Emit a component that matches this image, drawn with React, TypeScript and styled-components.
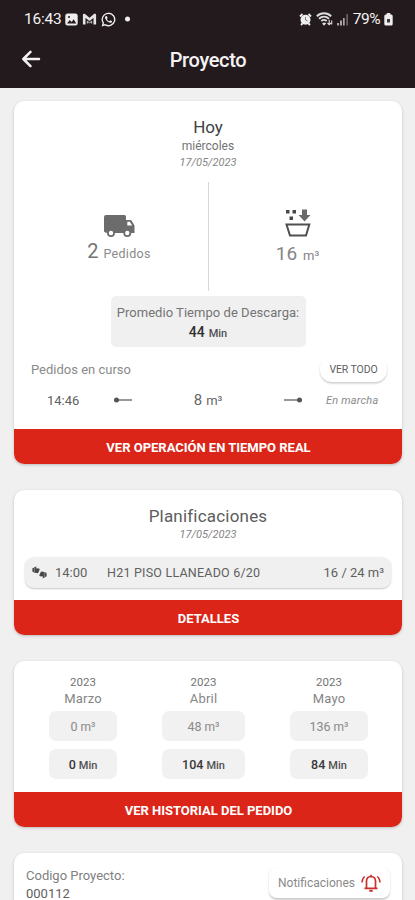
import React from 'react';
import styled, { createGlobalStyle } from 'styled-components';

const GlobalStyle = createGlobalStyle`
  * { box-sizing: border-box; }
  html, body { margin: 0; height: 900px; overflow: hidden; background: #f0f0f0; }
  body { font-family: Roboto, "Liberation Sans", sans-serif; color: #747474; }
  svg { display: block; flex: none; }
`;

const Screen = styled.div`
  width: 415px;
  height: 900px;
  overflow: hidden;
  background: #f0f0f0;
`;

const Header = styled.header`
  height: 88px;
  background: #231a1d;
  color: #f4f2f2;
`;

const StatusBar = styled.div`
  display: flex;
  align-items: center;
  justify-content: space-between;
  height: 38px;
  padding: 0 22px 0 24px;
`;

const StatusGroup = styled.div<{ $gap: number }>`
  display: flex;
  align-items: center;
  gap: ${(p) => p.$gap}px;
`;

const TitleBar = styled.div`
  display: grid;
  grid-template-columns: 40px 1fr 40px;
  align-items: center;
  height: 43px;
  padding: 0 19px 0 20px;
`;

const Title = styled.h1`
  margin: 0;
  font-size: 20px;
  font-weight: 500;
  line-height: 44px;
  text-align: center;
  letter-spacing: -0.35px;
`;

const BackButton = styled.button`
  display: flex;
  padding: 0 0 3px;
  border: 0;
  background: none;
  color: inherit;
`;

const Cards = styled.main`
  display: flex;
  flex-direction: column;
  gap: 26px;
  padding: 13px 13px 0 14px;
`;

const Card = styled.section<{ $height: number }>`
  display: flex;
  flex-direction: column;
  flex: none;
  height: ${(p) => p.$height}px;
  border-radius: 10px;
  background: #fff;
  overflow: hidden;
  box-shadow: 0 1px 3px rgba(0, 0, 0, 0.22);
`;

const CardAction = styled.button`
  height: 35px;
  margin-top: auto;
  padding: 2px 0 0 1px;
  border: 0;
  background: #db2518;
  color: #fff;
  font: 700 13px/33px Roboto, sans-serif;
  letter-spacing: -0.01px;
`;

interface TextProps {
  $size: number;
  $line?: number;
  $color?: string;
  $weight?: number;
  $italic?: boolean;
  $spacing?: number;
}

const Text = styled.span<TextProps>`
  display: block;
  font-size: ${(p) => p.$size}px;
  line-height: ${(p) => (p.$line ? `${p.$line}px` : 'normal')};
  color: ${(p) => p.$color ?? 'inherit'};
  font-weight: ${(p) => p.$weight ?? 400};
  font-style: ${(p) => (p.$italic ? 'italic' : 'normal')};
  letter-spacing: ${(p) => p.$spacing ?? 0}px;
  white-space: pre;
`;

const CardHeading = styled.div`
  display: flex;
  flex-direction: column;
  align-items: center;
  padding-top: 16px;
`;

const Totals = styled.div`
  display: grid;
  grid-template-columns: 194px 1px 1fr;
  height: 109px;
  margin-top: 12px;
`;

const Divider = styled.div`
  background: #d6d6d6;
`;

const Total = styled.div<{ $top: number; $left?: number; $right?: number; $gap: number }>`
  display: flex;
  flex-direction: column;
  align-items: center;
  gap: ${(p) => p.$gap}px;
  padding: ${(p) => p.$top}px ${(p) => p.$right ?? 0}px 0 ${(p) => p.$left ?? 0}px;
`;

const Quantity = styled.div<{ $gap: number }>`
  display: flex;
  align-items: baseline;
  justify-content: center;
  gap: ${(p) => p.$gap}px;
`;

const Average = styled.div`
  display: flex;
  flex-direction: column;
  align-items: center;
  align-self: center;
  width: 195px;
  height: 51px;
  margin-top: 5px;
  padding: 7px 0 0;
  border-radius: 5px;
  background: #f0f0f0;
`;

const CurrentHeader = styled.div`
  display: flex;
  align-items: center;
  justify-content: space-between;
  height: 26px;
  margin-top: 9px;
  padding: 0 15px 0 17px;
`;

const PillButton = styled.button<{ $width: number; $height: number; $radius: number }>`
  display: flex;
  align-items: center;
  justify-content: center;
  gap: 6px;
  flex: none;
  width: ${(p) => p.$width}px;
  height: ${(p) => p.$height}px;
  padding: 0;
  border: 0;
  border-radius: ${(p) => p.$radius}px;
  background: #fff;
  color: inherit;
  font-family: inherit;
  box-shadow: 0 1.5px 2px rgba(0, 0, 0, 0.2);
`;

const OrderRow = styled.div`
  display: grid;
  grid-template-columns: 66px 20px 150px 43px 1fr;
  align-items: center;
  height: 20px;
  margin: 8px 0 0 33px;
`;

const PlanRow = styled.div`
  display: grid;
  grid-template-columns: 23px 52px 1fr auto;
  align-items: center;
  height: 31px;
  margin: 14px 11px 0 11px;
  padding: 0 7px 0 7px;
  border-radius: 9px;
  background: #f0f0f0;
  color: #606060;
  box-shadow: 0 1px 2px rgba(0, 0, 0, 0.22);
`;

const Months = styled.div`
  display: flex;
  justify-content: space-between;
  padding: 14px 34px 0 35px;
`;

const Month = styled.div<{ $width: number }>`
  display: flex;
  flex-direction: column;
  align-items: center;
  width: ${(p) => p.$width}px;
`;

const Chip = styled.div<{ $top: number }>`
  display: flex;
  align-items: baseline;
  justify-content: center;
  gap: 3px;
  align-self: stretch;
  height: 30px;
  margin-top: ${(p) => p.$top}px;
  border-radius: 7px;
  background: #f1f1f1;
`;

const ProjectRow = styled.div`
  display: flex;
  justify-content: space-between;
  padding: 14px 12px 0 12px;
`;

const MONTHS = [
  { name: 'Marzo', volume: '0', minutes: '0', width: 68 },
  { name: 'Abril', volume: '48', minutes: '104', width: 83 },
  { name: 'Mayo', volume: '136', minutes: '84', width: 78 },
];

const ImageIcon = () => (
  <svg width="13" height="13" viewBox="0 0 13 13">
    <rect x="0.3" y="0.5" width="12.4" height="12" rx="2.5" fill="#eee" />
    <path d="M2 10.5 4.7 7l2 2 2-2.8 2.6 4.3z" fill="#231a1d" />
    <circle cx="4" cy="4" r="1" fill="#231a1d" />
  </svg>
);

const MailIcon = () => (
  <svg width="15" height="12" viewBox="0 0 15 12" fill="none" stroke="#e6e3e3">
    <path d="M2.2 11.500V2l5.3 4.500L12.800 2v9.500" strokeWidth="2.600" strokeLinejoin="round" />
    <path d="M5.300 10.500V8.300l2.200 1.500 2.200-1.500v2.200" strokeWidth="0.900" />
  </svg>
);

const WhatsAppIcon = () => (
  <svg width="15" height="15" viewBox="0 0 24 24" fill="#eee">
    <path d="M12 1A11 11 0 0 0 2.6 17.7L1 23l5.5-1.5A11 11 0 1 0 12 1zm0 2.2a8.8 8.8 0 1 1-5.2 15.9l-2.7.8.8-2.6A8.8 8.8 0 0 1 12 3.200z" />
    <path d="M8 6.300c-1.700.9-2 2.800-.8 5 1.800 3.300 4.300 5.400 7.400 6 1.600.3 3-.8 3.200-2.500l-2.900-1.500-1.400 1.600c-2-.8-3.200-2-4.100-3.800l1.200-1.400L9.200 6.500z" />
  </svg>
);

const AlarmIcon = () => (
  <svg width="13" height="13" viewBox="0 0 13 13">
    <path d="M1 3.500 3.500 1M12 3.500 9.500 1M2 12l2-2M11 12l-2-2" stroke="#eee" strokeWidth="1.800" />
    <circle cx="6.500" cy="6.800" r="5" fill="#eee" />
    <path d="M6.500 4v3l2 1" stroke="#827b7d" strokeWidth="1" fill="none" />
  </svg>
);

const WifiIcon = () => (
  <svg width="17" height="14" viewBox="0 0 17 14" fill="none" stroke="#ddd" strokeWidth="1.900">
    <path d="M.8 4.200C5 .2 11 .2 15.200 4.200M3 6.700c3-2.700 7-2.700 10 0M5.300 9c1.800-1.500 3.600-1.500 5.400 0" />
    <path d="M6.800 11 8 12.400l1.500-1.600" />
    <path d="M13.200 7.800v4.600M11.500 11l1.700 1.700 1.700-1.700M15.700 12.500V8.500" strokeWidth="1.100" />
  </svg>
);

const SignalIcon = () => (
  <svg width="12" height="13" viewBox="0 0 12 13">
    <path d="M0 10h2v2.500H0zM3 7.500h2v5H3zM6 5h1.700v7.500H6z" fill="#aaa5a6" />
    <path d="M9.300 1H11v11.500H9.300z" fill="#686062" />
  </svg>
);

const BatteryIcon = () => (
  <svg width="9" height="13" viewBox="0 0 9 13">
    <rect x="2.500" y="0" width="4" height="3" rx="1" fill="#eee" />
    <rect x="0.300" y="1.500" width="8.400" height="11" rx="1.600" fill="#eee" />
    <path d="M3 6h3v3.500H3z" fill="#40383a" />
  </svg>
);

const BackIcon = () => (
  <svg width="21" height="20" viewBox="0 0 21 20" fill="none" stroke="#f4f2f2" strokeWidth="2.500" strokeLinecap="round" strokeLinejoin="round">
    <path d="M10.500 2.800 3.300 10l7.200 7.200M3.500 10H19" />
  </svg>
);

const TruckIcon = () => (
  <svg width="31" height="22" viewBox="0 0 31 22">
    <path d="M2 0h18.500q1.500 0 1.500 1.500V5h4.200q1 0 1.600.9l2.700 4.600V18h-25Q0 18 0 16V2Q0 0 2 0z" fill="#6c6c6c" />
    <path d="M23.300 6.800h2.500l2.400 3.800h-4.900z" fill="#fff" />
    <g fill="#fff" stroke="#6c6c6c" strokeWidth="1.800">
      <circle cx="7" cy="18" r="3.100" />
      <circle cx="23.300" cy="18" r="3.100" />
    </g>
  </svg>
);

const VolumeIcon = () => (
  <svg width="26" height="28" viewBox="0 0 26 28">
    <path d="M1 1h3.500v3.500H1zM7.500 1H11v3.500H7.500zM4.500 7.500H8V11H4.500z" fill="#484848" />
    <path d="M17 .5h5V6h3.500l-6 6.500-6-6.500H17z" fill="#6a6a6a" />
    <path d="M1.500 15.500h22.800L21 26.500H5z" fill="#fff" stroke="#505050" strokeWidth="2" />
  </svg>
);

const TripArrow = ({ start }: { start: boolean }) => (
  <svg width="20" height="6" viewBox="0 0 20 6">
    <path d="M1 3h18" stroke="#777" strokeWidth="1.500" />
    <circle cx={start ? 3.500 : 16.500} cy="3" r="2.500" fill="#555" />
  </svg>
);

const ThumbsIcon = () => (
  <svg width="15" height="13" viewBox="0 0 15 13" fill="#484848">
    <path d="M.3 2.500 4.500.2 4 2.300l3 .3q1 .3.500 1.400L6 7.200 2.600 6.800.5 5.700z" />
    <path d="M14.700 10.300l-4.200 2.300.5-2.100-3-.3q-1-.3-.500-1.400L9 5.600l3.400.4 2.100 1.100z" />
    <path d="M2.600 1.800v4.800M12.400 6.200V11" stroke="#aaa" strokeWidth=".6" />
  </svg>
);

const BellIcon = () => (
  <svg width="20" height="18" viewBox="0 0 20 18" fill="none" stroke="#c9322b" strokeWidth="1.700">
    <path d="M3.500 14.300h13M5.500 14V7.200q0-4.500 4.500-4.700 4.500.2 4.500 4.700V14M10 2.500V.8" />
    <path d="M8.300 16.700h3.400" strokeWidth="2" />
    <path d="M1 8.500Q1.100 4.500 3.700 2.500M19 8.500q-.1-4-2.700-6" strokeWidth="1.500" />
  </svg>
);

export default function App() {
  return (
    <Screen>
      <GlobalStyle />
      <Header>
        <StatusBar>
          <StatusGroup $gap={4}>
            <Text $size={15.5} $spacing={-0.25}>16:43</Text>
            <ImageIcon />
            <MailIcon />
            <WhatsAppIcon />
            <svg width="12" height="6" viewBox="0 0 12 6">
              <circle cx="7.500" cy="3" r="2.500" fill="#eee" />
            </svg>
          </StatusGroup>
          <StatusGroup $gap={4}>
            <AlarmIcon />
            <WifiIcon />
            <SignalIcon />
            <Text $size={15.5} $spacing={-0.5}>79%</Text>
            <BatteryIcon />
          </StatusGroup>
        </StatusBar>
        <TitleBar>
          <BackButton aria-label="Volver"><BackIcon /></BackButton>
          <Title>Proyecto</Title>
        </TitleBar>
      </Header>

      <Cards>
        <Card $height={363}>
          <CardHeading>
            <Text $size={17} $line={20} $color="#404040">Hoy</Text>
            <Text $size={12} $line={19} $color="#747474">miércoles</Text>
            <Text $size={11} $line={14} $color="#858585" $italic>17/05/2023</Text>
          </CardHeading>
          <Totals>
            <Total $top={33} $left={16} $gap={3}>
              <TruckIcon />
              <Quantity $gap={5}>
                <Text $size={20} $line={23}>2</Text>
                <Text $size={12.5} $spacing={0.3} $color="#8a8a8a">Pedidos</Text>
              </Quantity>
            </Total>
            <Divider />
            <Total $top={27} $right={16} $gap={5}>
              <VolumeIcon />
              <Quantity $gap={6}>
                <Text $size={19} $line={23} $color="#858585">16</Text>
                <Text $size={13} $color="#858585">m³</Text>
              </Quantity>
            </Total>
          </Totals>
          <Average>
            <Text $size={13} $line={19} $spacing={0.04}>Promedio Tiempo de Descarga:</Text>
            <Quantity $gap={4}>
              <Text $size={14} $line={20} $color="#303030" $weight={500}>44</Text>
              <Text $size={11} $color="#505050" $weight={500}>Min</Text>
            </Quantity>
          </Average>
          <CurrentHeader>
            <Text $size={13} $color="#8a8a8a">Pedidos en curso</Text>
            <PillButton $width={67} $height={25} $radius={12}>
              <Text $size={10.5} $color="#606060" $spacing={-0.1}>VER TODO</Text>
            </PillButton>
          </CurrentHeader>
          <OrderRow>
            <Text $size={13} $color="#606060">14:46</Text>
            <TripArrow start />
            <Quantity $gap={4}>
              <Text $size={15} $color="#666">8</Text>
              <Text $size={13} $color="#666">m³</Text>
            </Quantity>
            <TripArrow start={false} />
            <Text $size={11} $color="#8a8a8a" $spacing={0.2} $italic>En marcha</Text>
          </OrderRow>
          <CardAction>VER OPERACIÓN EN TIEMPO REAL</CardAction>
        </Card>

        <Card $height={145}>
          <CardHeading>
            <Text $size={17} $line={20} $color="#5c5c5c" $spacing={0.2}>Planificaciones</Text>
            <Text $size={11} $line={17} $color="#858585" $italic>17/05/2023</Text>
          </CardHeading>
          <PlanRow>
            <ThumbsIcon />
            <Text $size={13}>14:00</Text>
            <Text $size={12.5} $spacing={0.22}>H21 PISO LLANEADO 6/20</Text>
            <Text $size={13}>16 / 24 m³</Text>
          </PlanRow>
          <CardAction>DETALLES</CardAction>
        </Card>

        <Card $height={166}>
          <Months>
            {MONTHS.map((m) => (
              <Month key={m.name} $width={m.width}>
                <Text $size={11.5} $line={15}>2023</Text>
                <Text $size={13} $line={17} $color="#858585" $spacing={0.2}>{m.name}</Text>
                <Chip $top={4}>
                  <Text $size={12.5} $line={31} $color="#8a8a8a">{m.volume}</Text>
                  <Text $size={12} $color="#8a8a8a">m³</Text>
                </Chip>
                <Chip $top={8}>
                  <Text $size={12.5} $line={31} $color="#383838" $weight={500}>{m.minutes}</Text>
                  <Text $size={11} $color="#505050" $weight={500}>Min</Text>
                </Chip>
              </Month>
            ))}
          </Months>
          <CardAction>VER HISTORIAL DEL PEDIDO</CardAction>
        </Card>

        <Card $height={90}>
          <ProjectRow>
            <div>
              <Text $size={13} $line={18} $color="#808080">Codigo Proyecto:</Text>
              <Text $size={13} $line={17} $color="#606060">000112</Text>
            </div>
            <PillButton $width={121} $height={31} $radius={8}>
              <Text $size={12} $color="#8a8a8a">Notificaciones</Text>
              <BellIcon />
            </PillButton>
          </ProjectRow>
        </Card>
      </Cards>
    </Screen>
  );
}
